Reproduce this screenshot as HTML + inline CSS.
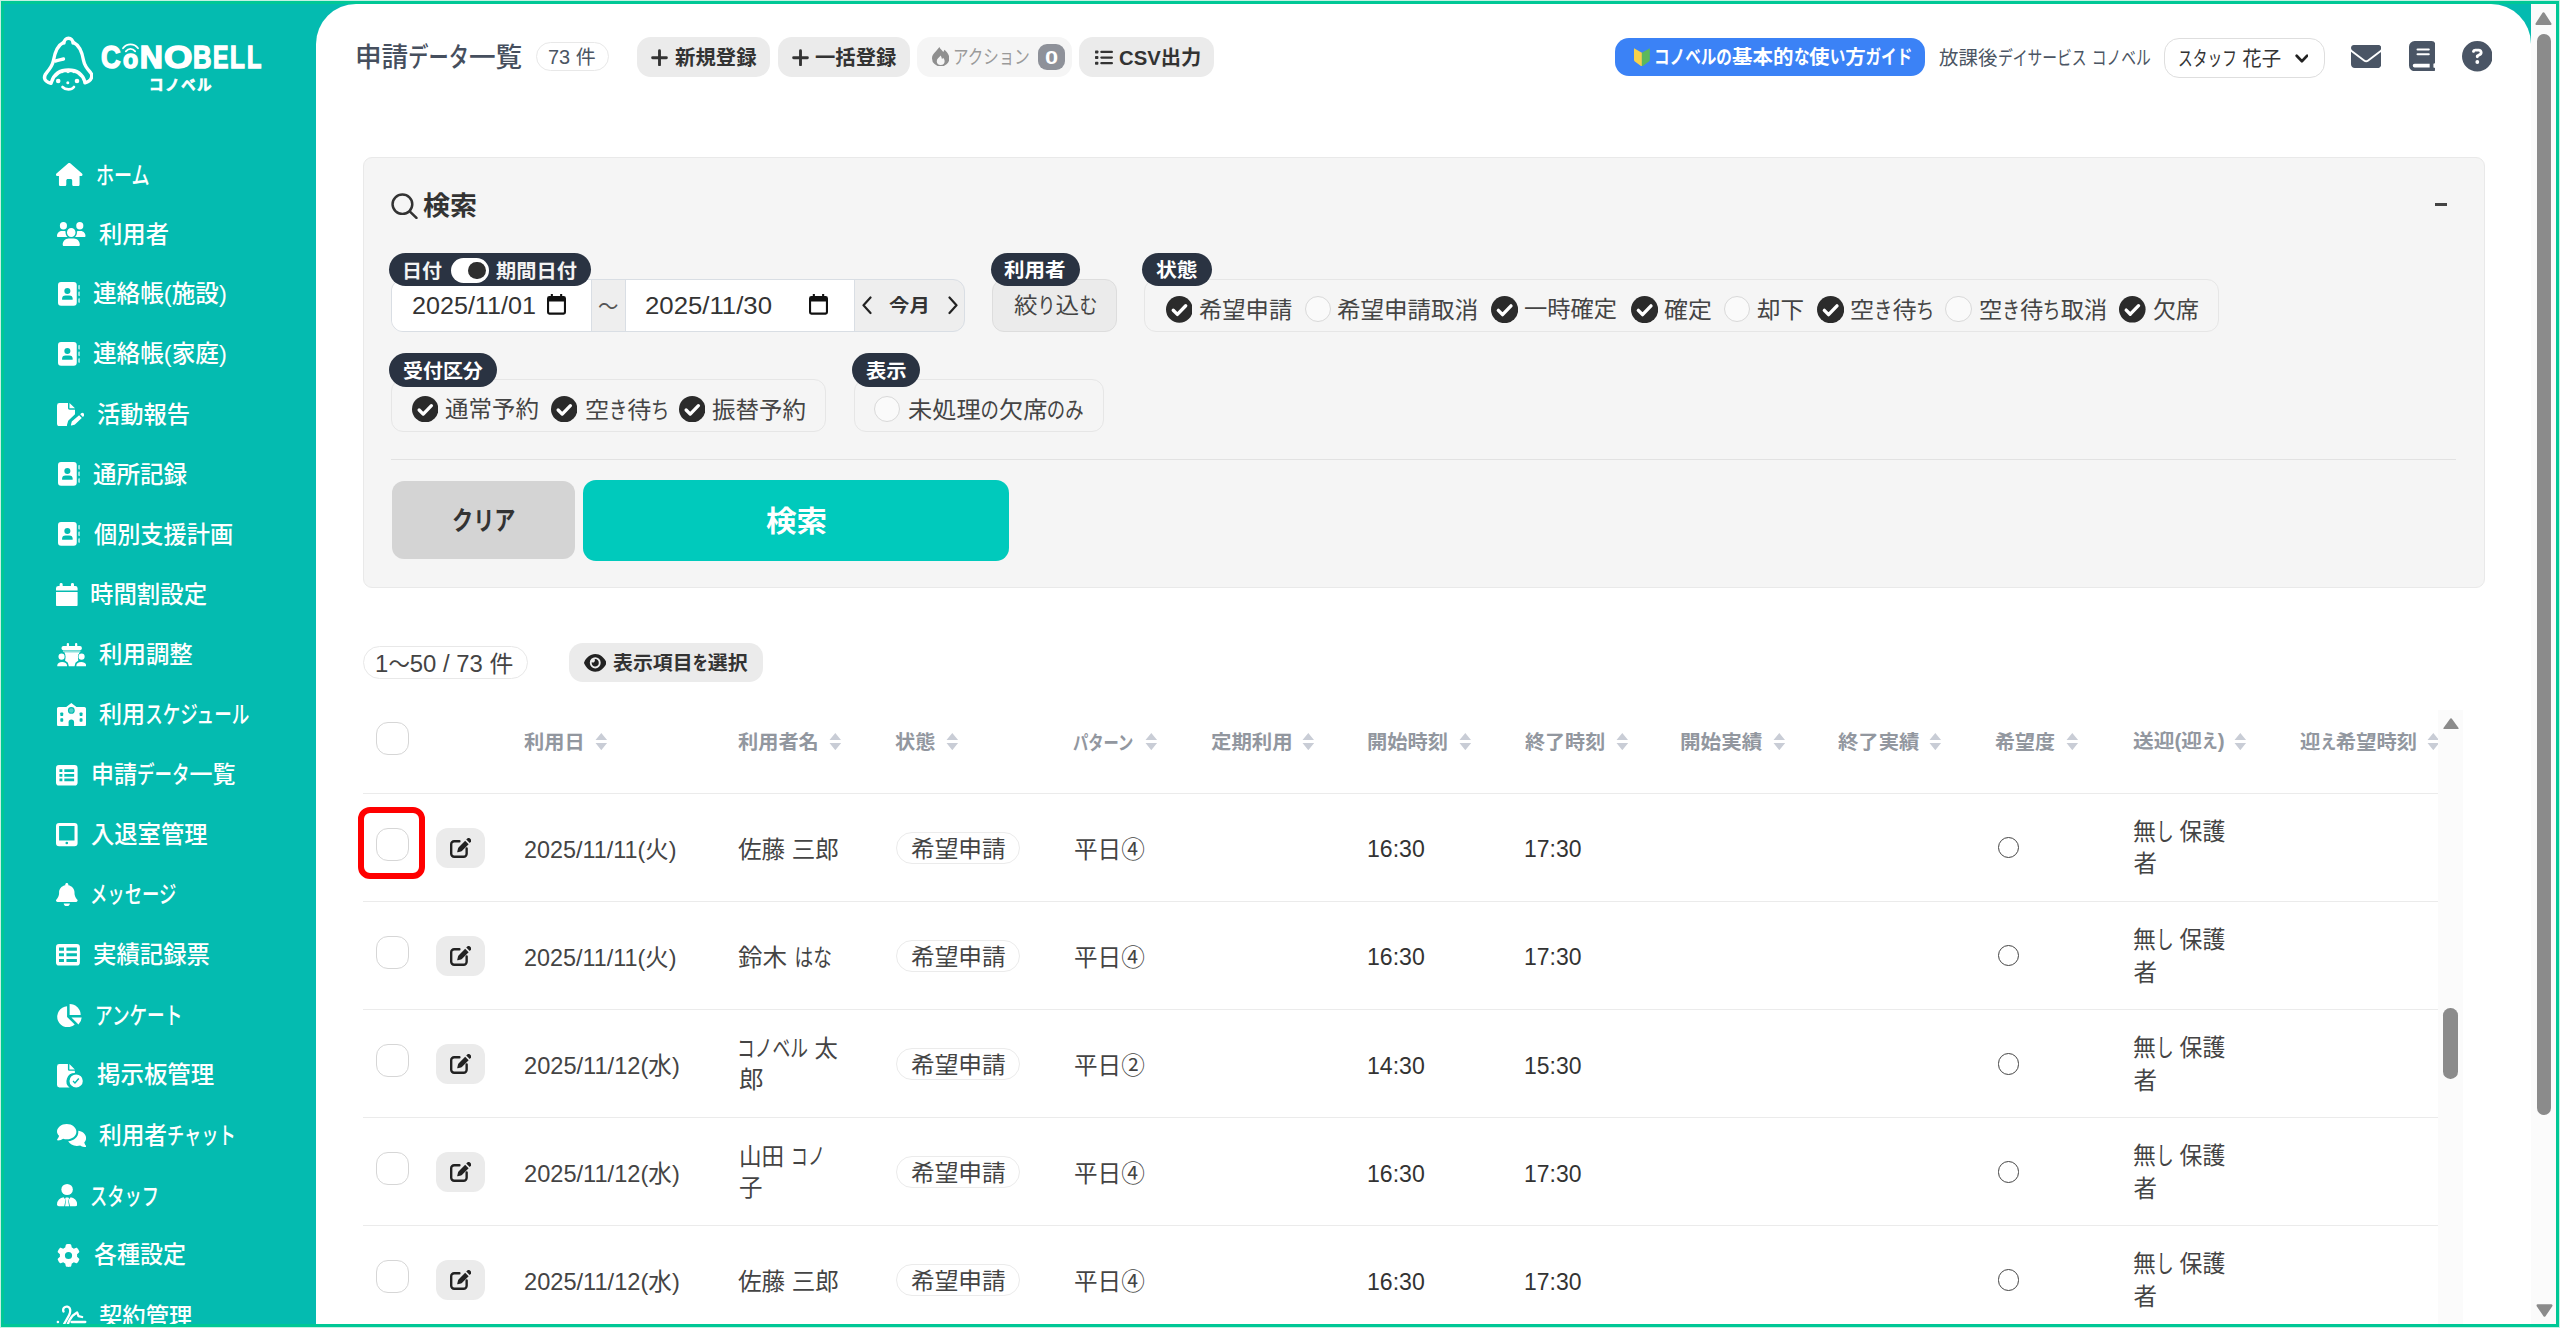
<!DOCTYPE html>
<html lang="ja"><head><meta charset="utf-8"><title>申請データ一覧</title><style>
*{margin:0;padding:0;box-sizing:border-box}
html,body{width:2560px;height:1328px;overflow:hidden;background:#fff}
body{font-family:"Liberation Sans","Noto Sans CJK JP",sans-serif;position:relative}
.a{position:absolute}
.t{position:absolute;white-space:nowrap;line-height:1;transform-origin:0 50%}
.k{display:inline-block;vertical-align:baseline}
.k>span{display:inline-block;transform-origin:0 50%;white-space:nowrap}
</style></head><body>
<div class="a" style="left:0.0px;top:0.0px;width:2560.0px;height:1328.0px;background:#04bbb0;"></div>
<div class="a" style="left:316.0px;top:4.0px;width:2215.0px;height:1336.0px;background:#fff;border-radius:40px 40px 0 0;"></div>
<div class="a" style="left:2531.0px;top:4.0px;width:25.0px;height:1320.0px;background:#fbfbfb;"></div>
<svg class="a" style="left:2535.0px;top:11.5px;" width="17.0" height="13.5" viewBox="0 0 17 13.5" preserveAspectRatio="none"><path fill="#8b8b8b" stroke="#8b8b8b" stroke-width="2.400" stroke-linejoin="round" d="M8.500 1.500l6.800 10.500h-13.600z"/></svg>
<div class="a" style="left:2536.5px;top:34.0px;width:14.3px;height:1081.0px;background:#8b8b8b;border-radius:7.2px;"></div>
<svg class="a" style="left:2535.5px;top:1304.0px;" width="17.0" height="13.0" viewBox="0 0 17 13" preserveAspectRatio="none"><path fill="#8b8b8b" stroke="#8b8b8b" stroke-width="2.400" stroke-linejoin="round" d="M8.500 11.500l6.800-10h-13.600z"/></svg>
<svg class="a" style="left:42.0px;top:35.0px;" width="51.0" height="57.0" viewBox="0 0 51 57" preserveAspectRatio="none"><g fill="none" stroke="#fff" stroke-width="3.400" stroke-linecap="round" stroke-linejoin="round"><path d="M22 8a4.500 4.800 0 0 1 9 0"/><path d="M21 7.800c-5.500 2.700-8 9-9.500 17.500c-1 5.500-3.500 8.500-7 12.500c-3 3.500-3.500 8.500 4.500 10.500"/><path d="M32 7.800c5.500 2.700 8 9 9.500 17.500c1 5.500 3.500 8.500 7 12.200c2.500 3 1.500 8.500-5.500 10.300"/><path d="M9.500 47c2.500-8 9-12 17-12s14 4 16.500 12"/><path d="M13.500 26c3-.8 5.500-1.500 8-2"/><path d="M20 37.500c1.500-1.500 4-1.500 6 0c2-1.500 4.500-1.500 6 0" stroke-width="1.500"/><path d="M20.500 52c3 3.200 9 3.200 11.500 0" stroke-width="2.600"/></g><circle cx="16.200" cy="46" r="2.300" fill="#fff"/><circle cx="35" cy="46" r="2.300" fill="#fff"/><circle cx="25.800" cy="47.800" r="1.500" fill="#fff"/></svg>
<div class="t" style="left:100.5px;top:41.3px;transform:scaleX(0.850);font-size:32px;font-weight:700;color:#fff;-webkit-text-stroke:1.500px #fff;">C</div>
<div class="t" style="left:139.8px;top:41.3px;transform:scaleX(1.000);font-size:32px;font-weight:700;color:#fff;-webkit-text-stroke:1.500px #fff;">N</div>
<div class="t" style="left:164.2px;top:41.3px;transform:scaleX(1.143);font-size:32px;font-weight:700;color:#fff;-webkit-text-stroke:1.500px #fff;">O</div>
<div class="t" style="left:193.2px;top:41.3px;transform:scaleX(0.800);font-size:32px;font-weight:700;color:#fff;-webkit-text-stroke:1.500px #fff;">B</div>
<div class="t" style="left:213.1px;top:41.3px;transform:scaleX(0.720);font-size:32px;font-weight:700;color:#fff;-webkit-text-stroke:1.500px #fff;">E</div>
<div class="t" style="left:230.4px;top:41.3px;transform:scaleX(0.756);font-size:32px;font-weight:700;color:#fff;-webkit-text-stroke:1.500px #fff;">L</div>
<div class="t" style="left:246.6px;top:41.3px;transform:scaleX(0.733);font-size:32px;font-weight:700;color:#fff;-webkit-text-stroke:1.500px #fff;">L</div>
<div class="t" style="left:122.6px;top:47.4px;transform:scaleX(0.987);font-size:25px;font-weight:700;color:#fff;-webkit-text-stroke:1.500px #fff;">o</div>
<svg class="a" style="left:121.5px;top:43.0px;" width="17.0" height="10.0" viewBox="0 0 17 10" preserveAspectRatio="none"><g fill="none" stroke="#fff" stroke-width="1.800" stroke-linecap="round"><path d="M1 5.200c4-5 11-5 15 0"/><path d="M3.800 8.400c2.700-3.300 6.700-3.300 9.400 0"/></g></svg>
<div class="t" style="left:148.7px;top:76.8px;transform:scaleX(0.969);font-size:15px;font-weight:700;color:#fff;letter-spacing:1.5px;-webkit-text-stroke:0.600px #fff;">コノベル</div>
<svg class="a" style="left:56.3px;top:163.0px;color:#fff;" width="26.5" height="23.3" viewBox="0 0 576 512" preserveAspectRatio="none"><path fill="currentColor" d="M575.8 255.5c0 18-15 32.100-32 32.100h-32l.7 160.200c0 2.700-.2 5.400-.5 8.100V472c0 22.100-17.900 40-40 40H456c-1.100 0-2.200 0-3.300-.1c-1.400 .1-2.800 .1-4.200 .1H416 392c-22.100 0-40-17.900-40-40V448 384c0-17.700-14.300-32-32-32H256c-17.700 0-32 14.300-32 32v64 24c0 22.100-17.900 40-40 40H160 128.100c-1.500 0-3-.1-4.500-.2c-1.200 .1-2.400 .2-3.600 .2H104c-22.100 0-40-17.900-40-40V360c0-.9 0-1.900 .1-2.800V287.600H32c-18 0-32-14-32-32.100c0-9 3-17 10-24L266.400 8c7-7 15-8 22-8s15 2 21 7L564.800 231.500c8 7 12 15 11 24z"/></svg>
<div class="t" style="left:96.0px;top:163.6px;transform:scaleX(0.990);font-size:24px;font-weight:500;color:#fff;"><span class="k" style="width:54.72px"><span style="transform:scaleX(0.76)">ホーム</span></span></div>
<svg class="a" style="left:57.0px;top:222.0px;color:#fff;" width="28.5" height="24.0" viewBox="0 0 640 512" preserveAspectRatio="none"><path fill="currentColor" d="M144 0a80 80 0 1 1 0 160A80 80 0 1 1 144 0zM512 0a80 80 0 1 1 0 160A80 80 0 1 1 512 0zM0 298.700C0 239.800 47.800 192 106.700 192h42.700c15.900 0 31 3.500 44.600 9.700c-1.300 7.200-1.900 14.700-1.900 22.300c0 38.200 16.800 72.500 43.300 96c-.2 0-.4 0-.7 0H21.300C9.600 320 0 310.400 0 298.700zM405.300 320c-.2 0-.4 0-.7 0c26.600-23.500 43.300-57.800 43.300-96c0-7.600-.7-15-1.900-22.300c13.600-6.300 28.700-9.700 44.600-9.700h42.700C592.200 192 640 239.800 640 298.700c0 11.800-9.600 21.300-21.300 21.300H405.300zM224 224a96 96 0 1 1 192 0 96 96 0 1 1 -192 0zM128 485.300C128 411.700 187.700 352 261.300 352H378.700C452.300 352 512 411.700 512 485.300c0 14.700-11.900 26.700-26.700 26.700H154.700c-14.700 0-26.700-11.900-26.700-26.700z"/></svg>
<div class="t" style="left:99.4px;top:222.5px;transform:scaleX(0.973);font-size:24px;font-weight:500;color:#fff;">利用者</div>
<svg class="a" style="left:58.0px;top:282.4px;color:#fff;" width="22.3" height="23.8" viewBox="0 0 22 24" preserveAspectRatio="none"><path fill="currentColor" fill-rule="evenodd" d="M3 0h12.500a3 3 0 0 1 3 3v18a3 3 0 0 1-3 3H3a3 3 0 0 1-3-3V3a3 3 0 0 1 3-3zM9.250 6a3 3 0 1 0 0 6a3 3 0 1 0 0-6zM7.500 13.500a3.500 3.500 0 0 0-3.500 3.500v.3a.7.7 0 0 0 .7.7h9.100a.7.7 0 0 0 .7-.7v-.3a3.500 3.500 0 0 0-3.500-3.500z"/><g fill="currentColor" opacity=".6"><rect x="19.800" y="3" width="2.200" height="4.500" rx="1"/><rect x="19.800" y="9.700" width="2.200" height="4.500" rx="1"/><rect x="19.800" y="16.400" width="2.200" height="4.500" rx="1"/></g></svg>
<div class="t" style="left:93.4px;top:282.0px;transform:scaleX(0.984);font-size:24px;font-weight:500;color:#fff;">連絡帳(施設)</div>
<svg class="a" style="left:58.0px;top:342.4px;color:#fff;" width="22.3" height="23.8" viewBox="0 0 22 24" preserveAspectRatio="none"><path fill="currentColor" fill-rule="evenodd" d="M3 0h12.500a3 3 0 0 1 3 3v18a3 3 0 0 1-3 3H3a3 3 0 0 1-3-3V3a3 3 0 0 1 3-3zM9.250 6a3 3 0 1 0 0 6a3 3 0 1 0 0-6zM7.500 13.500a3.500 3.500 0 0 0-3.500 3.500v.3a.7.7 0 0 0 .7.7h9.100a.7.7 0 0 0 .7-.7v-.3a3.500 3.500 0 0 0-3.500-3.500z"/><g fill="currentColor" opacity=".6"><rect x="19.800" y="3" width="2.200" height="4.500" rx="1"/><rect x="19.800" y="9.700" width="2.200" height="4.500" rx="1"/><rect x="19.800" y="16.400" width="2.200" height="4.500" rx="1"/></g></svg>
<div class="t" style="left:93.4px;top:342.0px;transform:scaleX(0.984);font-size:24px;font-weight:500;color:#fff;">連絡帳(家庭)</div>
<svg class="a" style="left:57.0px;top:402.6px;color:#fff;" width="27.0" height="23.2" viewBox="0 0 27 24" preserveAspectRatio="none"><path fill="currentColor" d="M2.500 0h8.500v5.500a1.500 1.500 0 0 0 1.500 1.500h5.500v4.600l-6.300 6.300a3 3 0 0 0-.8 1.400l-.9 3.600a1.500 1.500 0 0 0 .1 1.100h-7.600a2.500 2.500 0 0 1-2.500-2.500v-19a2.500 2.500 0 0 1 2.500-2.500zM12.500 0l5.500 5.500h-5.500z"/><path fill="currentColor" d="M24.200 10.700a1.600 1.600 0 0 1 2.300 0l.4.4a1.600 1.600 0 0 1 0 2.300l-1 1-2.700-2.700zM22.100 12.800l2.700 2.700-6.600 6.600a1.500 1.500 0 0 1-.7.400l-3 .75a.5.5 0 0 1-.6-.6l.75-3a1.500 1.500 0 0 1 .4-.7z"/></svg>
<div class="t" style="left:96.7px;top:402.5px;transform:scaleX(0.970);font-size:24px;font-weight:500;color:#fff;">活動報告</div>
<svg class="a" style="left:58.0px;top:462.4px;color:#fff;" width="22.3" height="23.8" viewBox="0 0 22 24" preserveAspectRatio="none"><path fill="currentColor" fill-rule="evenodd" d="M3 0h12.500a3 3 0 0 1 3 3v18a3 3 0 0 1-3 3H3a3 3 0 0 1-3-3V3a3 3 0 0 1 3-3zM9.250 6a3 3 0 1 0 0 6a3 3 0 1 0 0-6zM7.500 13.500a3.500 3.500 0 0 0-3.500 3.500v.3a.7.7 0 0 0 .7.7h9.100a.7.7 0 0 0 .7-.7v-.3a3.500 3.500 0 0 0-3.500-3.500z"/><g fill="currentColor" opacity=".6"><rect x="19.800" y="3" width="2.200" height="4.500" rx="1"/><rect x="19.800" y="9.700" width="2.200" height="4.500" rx="1"/><rect x="19.800" y="16.400" width="2.200" height="4.500" rx="1"/></g></svg>
<div class="t" style="left:93.4px;top:462.5px;transform:scaleX(0.980);font-size:24px;font-weight:500;color:#fff;">通所記録</div>
<svg class="a" style="left:58.0px;top:522.4px;color:#fff;" width="22.3" height="23.8" viewBox="0 0 22 24" preserveAspectRatio="none"><path fill="currentColor" fill-rule="evenodd" d="M3 0h12.500a3 3 0 0 1 3 3v18a3 3 0 0 1-3 3H3a3 3 0 0 1-3-3V3a3 3 0 0 1 3-3zM9.250 6a3 3 0 1 0 0 6a3 3 0 1 0 0-6zM7.500 13.500a3.500 3.500 0 0 0-3.500 3.500v.3a.7.7 0 0 0 .7.7h9.100a.7.7 0 0 0 .7-.7v-.3a3.500 3.500 0 0 0-3.500-3.500z"/><g fill="currentColor" opacity=".6"><rect x="19.800" y="3" width="2.200" height="4.500" rx="1"/><rect x="19.800" y="9.700" width="2.200" height="4.500" rx="1"/><rect x="19.800" y="16.400" width="2.200" height="4.500" rx="1"/></g></svg>
<div class="t" style="left:94.4px;top:522.5px;transform:scaleX(0.966);font-size:24px;font-weight:500;color:#fff;">個別支援計画</div>
<svg class="a" style="left:56.3px;top:582.5px;color:#fff;" width="21.6" height="23.9" viewBox="0 0 21 24" preserveAspectRatio="none"><path fill="currentColor" d="M5 0a1.500 1.500 0 0 1 1.500 1.500v1.500h8v-1.500a1.500 1.500 0 0 1 3 0v1.500h1.200a2.300 2.300 0 0 1 2.300 2.300v2.200h-21v-2.200a2.300 2.300 0 0 1 2.300-2.300h1.200v-1.500a1.500 1.500 0 0 1 1.500-1.500zM0 9h21v12.700a2.300 2.300 0 0 1-2.300 2.300h-16.400a2.300 2.300 0 0 1-2.300-2.300z"/></svg>
<div class="t" style="left:89.8px;top:582.5px;transform:scaleX(0.976);font-size:24px;font-weight:500;color:#fff;">時間割設定</div>
<svg class="a" style="left:56.6px;top:643.3px;color:#fff;" width="29.4" height="23.6" viewBox="200 160 355 285" preserveAspectRatio="none"><g fill="currentColor"><rect x="318" y="160" width="27" height="48" rx="11"/><rect x="418" y="160" width="27" height="48" rx="11"/><rect x="255" y="195" width="245" height="52" rx="22"/><rect x="272" y="251" width="211" height="19" opacity=".55"/><path d="M288 272H475C455 300 450 350 458 372L423 398L412 441H343L332 398L297 372C305 350 308 300 288 272Z"/><circle cx="255" cy="325" r="44" fill="#04bbb0"/><circle cx="497" cy="325" r="44" fill="#04bbb0"/><circle cx="255" cy="325" r="37"/><circle cx="497" cy="325" r="37"/><path d="M203 441v-9c0-25 25-42 59-42s59 17 59 42v9z"/><path d="M434 441v-9c0-25 25-42 59-42s59 17 59 42v9z"/></g></svg>
<div class="t" style="left:99.4px;top:642.5px;transform:scaleX(0.977);font-size:24px;font-weight:500;color:#fff;">利用調整</div>
<svg class="a" style="left:57.0px;top:703.3px;color:#fff;" width="29.0" height="23.2" viewBox="205 885 350 280" preserveAspectRatio="none"><path fill="currentColor" d="M378 885L440 932H535a20 20 0 0 1 20 20V1145a20 20 0 0 1-20 20H225a20 20 0 0 1-20-20V952a20 20 0 0 1 20-20H316Z"/><g fill="#04bbb0"><rect x="245" y="1000" width="35" height="42" rx="9"/><rect x="245" y="1070" width="35" height="42" rx="9"/><rect x="478" y="1000" width="35" height="42" rx="9"/><rect x="478" y="1070" width="35" height="42" rx="9"/><circle cx="378" cy="975" r="41"/><path d="M345 1165V1118a33 33 0 0 1 66 0V1165Z"/><rect x="316" y="940" width="5" height="225" opacity=".0"/></g><circle cx="378" cy="975" r="27" fill="currentColor" opacity=".3"/></svg>
<div class="t" style="left:99.4px;top:703.0px;transform:scaleX(0.962);font-size:24px;font-weight:500;color:#fff;">利用<span class="k" style="width:109.44px"><span style="transform:scaleX(0.76)">スケジュール</span></span></div>
<svg class="a" style="left:56.3px;top:765.4px;color:#fff;" width="21.6" height="20.6" viewBox="0 0 22 20" preserveAspectRatio="none"><path fill="currentColor" fill-rule="evenodd" d="M3 0h16a3 3 0 0 1 3 3v14a3 3 0 0 1-3 3h-16a3 3 0 0 1-3-3v-14a3 3 0 0 1 3-3zM3.500 4.200v2.600h3v-2.600zM8.500 4.200v2.600h10v-2.600zM3.500 8.700v2.600h3v-2.600zM8.500 8.700v2.600h10v-2.600zM3.500 13.200v2.600h3v-2.600zM8.500 13.200v2.600h10v-2.600z"/></svg>
<div class="t" style="left:90.9px;top:763.0px;transform:scaleX(0.958);font-size:24px;font-weight:500;color:#fff;">申請<span class="k" style="width:54.72px"><span style="transform:scaleX(0.76)">データ</span></span>一覧</div>
<svg class="a" style="left:56.3px;top:823.4px;color:#fff;" width="21.6" height="23.2" viewBox="0 0 21 24" preserveAspectRatio="none"><path fill="currentColor" fill-rule="evenodd" d="M3 0h15a3 3 0 0 1 3 3v18a3 3 0 0 1-3 3h-15a3 3 0 0 1-3-3v-18a3 3 0 0 1 3-3zM3 3v15h15v-15zM10.500 19.500a1.300 1.300 0 1 0 0 2.600a1.300 1.300 0 1 0 0-2.600z"/></svg>
<div class="t" style="left:90.8px;top:822.5px;transform:scaleX(0.971);font-size:24px;font-weight:500;color:#fff;">入退室管理</div>
<svg class="a" style="left:56.3px;top:883.0px;color:#fff;" width="21.6" height="23.3" viewBox="0 0 448 512" preserveAspectRatio="none"><path fill="currentColor" d="M224 0c-17.700 0-32 14.300-32 32V51.200C119 66 64 130.600 64 208v18.800c0 47-17.300 92.400-48.500 127.600l-7.400 8.300c-8.400 9.400-10.400 22.900-5.300 34.400S19.400 416 32 416H416c12.600 0 24-7.400 29.200-18.900s3.100-25-5.300-34.400l-7.400-8.300C401.300 319.200 384 273.900 384 226.800V208c0-77.400-55-142-128-156.800V32c0-17.700-14.300-32-32-32zm45.300 493.300c12-12 18.700-28.300 18.700-45.300H224 160c0 17 6.700 33.300 18.700 45.300s28.300 18.700 45.300 18.700s33.300-6.700 45.300-18.700z"/></svg>
<div class="t" style="left:89.9px;top:882.5px;transform:scaleX(0.952);font-size:24px;font-weight:500;color:#fff;"><span class="k" style="width:91.20px"><span style="transform:scaleX(0.76)">メッセージ</span></span></div>
<svg class="a" style="left:56.3px;top:944.4px;color:#fff;" width="23.9" height="21.6" viewBox="0 0 24 21" preserveAspectRatio="none"><path fill="currentColor" fill-rule="evenodd" d="M3 0h18a3 3 0 0 1 3 3v15a3 3 0 0 1-3 3h-18a3 3 0 0 1-3-3v-15a3 3 0 0 1 3-3zM3 3.500v3h5v-3zM10.500 3.500v3h10.500v-3zM3 9v3h5v-3zM10.500 9v3h10.500v-3zM3 14.500v3h5v-3zM10.500 14.500v3h10.500v-3z"/></svg>
<div class="t" style="left:93.4px;top:942.5px;transform:scaleX(0.975);font-size:24px;font-weight:500;color:#fff;">実績記録票</div>
<svg class="a" style="left:57.4px;top:1004.3px;color:#fff;" width="25.2" height="23.0" viewBox="0 0 25 23" preserveAspectRatio="none"><path fill="currentColor" d="M10 2.200v10.800l7.600 7.600a10.500 10.500 0 1 1-7.600-18.400z"/><path fill="currentColor" d="M12.500 0a11 11 0 0 1 11 11h-11z"/><path fill="currentColor" d="M14.300 13.500h10.200a11 11 0 0 1-3.200 7z"/></svg>
<div class="t" style="left:95.1px;top:1004.0px;transform:scaleX(0.965);font-size:24px;font-weight:500;color:#fff;"><span class="k" style="width:91.20px"><span style="transform:scaleX(0.76)">アンケート</span></span></div>
<svg class="a" style="left:56.8px;top:1064.0px;color:#fff;" width="25.8" height="23.5" viewBox="0 0 26 24" preserveAspectRatio="none"><path fill="currentColor" d="M2.500 0h8.500v5.500a1.500 1.500 0 0 0 1.500 1.500h5.500v2.200a8.300 8.300 0 0 0-5.300 14.800h-10.200a2.500 2.500 0 0 1-2.500-2.500v-19a2.500 2.500 0 0 1 2.500-2.500zM12.500 0l5.500 5.500h-5.500z"/><path fill="currentColor" fill-rule="evenodd" d="M19.300 10.600a6.700 6.700 0 1 0 0 13.400a6.700 6.700 0 1 0 0-13.400zM22.500 15.200l-3.900 4.700a.7.7 0 0 1-1 0l-1.900-2 1-1 1.300 1.400 3.400-4z"/></svg>
<div class="t" style="left:96.5px;top:1063.0px;transform:scaleX(0.977);font-size:24px;font-weight:500;color:#fff;">掲示板管理</div>
<svg class="a" style="left:56.8px;top:1124.0px;color:#fff;" width="29.1" height="23.0" viewBox="0 0 30 24" preserveAspectRatio="none"><path fill="currentColor" d="M10 0c5.500 0 10 3.600 10 8s-4.500 8-10 8a12 12 0 0 1-3.600-.55c-1.300 .9-3.200 1.700-5.500 1.700a.8.8 0 0 1-.6-1.300c.6-.7 1.500-1.900 1.900-3.500c-1.400-1.400-2.200-3-2.200-4.350c0-4.400 4.500-8 10-8z"/><path fill="currentColor" d="M21.800 7.100c4.700 .5 8.200 3.800 8.200 7.700c0 1.700-.7 3.300-1.900 4.600c.4 1.500 1.200 2.700 1.800 3.400a.8.8 0 0 1-.6 1.300c-2.200 0-4.100-.8-5.400-1.700a12 12 0 0 1-3.500 .5c-4 0-7.400-2-8.900-4.800c6 -.5 10.500-4.700 10.500-9.700q0-.7-.2-1.300z"/></svg>
<div class="t" style="left:99.4px;top:1123.5px;transform:scaleX(0.945);font-size:24px;font-weight:500;color:#fff;">利用者<span class="k" style="width:72.96px"><span style="transform:scaleX(0.76)">チャット</span></span></div>
<svg class="a" style="left:56.8px;top:1184.4px;color:#fff;" width="20.2" height="22.2" viewBox="0 0 21 24" preserveAspectRatio="none"><circle fill="currentColor" cx="10.500" cy="6" r="6"/><path fill="currentColor" d="M6.800 14.200l2.200 3-1.500 6.800h-5.500a2 2 0 0 1-2-2.200a8 8 0 0 1 6.800-7.600zM14.200 14.200a8 8 0 0 1 6.800 7.600a2 2 0 0 1-2 2.200h-5.500l-1.500-6.800zM9.200 14.500h2.600l.8 1.500-1.100 1.500 1.100 6.500h-4.200l1.100-6.500-1.100-1.500z"/></svg>
<div class="t" style="left:89.5px;top:1184.5px;transform:scaleX(0.945);font-size:24px;font-weight:500;color:#fff;"><span class="k" style="width:72.96px"><span style="transform:scaleX(0.76)">スタッフ</span></span></div>
<svg class="a" style="left:56.8px;top:1244.0px;color:#fff;" width="23.0" height="23.0" viewBox="0 0 512 512" preserveAspectRatio="none"><path fill="currentColor" d="M495.900 166.600c3.200 8.700 .5 18.400-6.400 24.600l-43.300 39.400c1.100 8.300 1.700 16.800 1.700 25.400s-.6 17.100-1.700 25.400l43.300 39.400c6.900 6.200 9.600 15.900 6.400 24.600c-4.400 11.900-9.700 23.300-15.800 34.300l-4.700 8.100c-6.600 11-14 21.400-22.100 31.200c-5.900 7.200-15.700 9.600-24.500 6.800l-55.700-17.700c-13.400 10.300-28.200 18.900-44 25.400l-12.500 57.100c-2 9.100-9 16.300-18.200 17.800c-13.800 2.300-28 3.500-42.500 3.500s-28.700-1.200-42.500-3.500c-9.200-1.500-16.200-8.700-18.200-17.800l-12.500-57.100c-15.800-6.500-30.600-15.100-44-25.400L83.100 425.900c-8.800 2.800-18.600 .3-24.500-6.800c-8.100-9.800-15.500-20.200-22.100-31.200l-4.700-8.100c-6.100-11-11.400-22.400-15.800-34.300c-3.200-8.700-.5-18.400 6.400-24.600l43.300-39.400C64.600 273.100 64 264.600 64 256s.6-17.100 1.700-25.400L22.400 191.200c-6.900-6.200-9.600-15.900-6.400-24.600c4.400-11.900 9.700-23.300 15.800-34.300l4.700-8.100c6.600-11 14-21.400 22.100-31.200c5.900-7.200 15.700-9.600 24.500-6.800l55.700 17.700c13.400-10.300 28.200-18.900 44-25.400l12.500-57.100c2-9.100 9-16.300 18.200-17.800C227.300 1.200 241.500 0 256 0s28.700 1.200 42.500 3.500c9.200 1.500 16.200 8.700 18.200 17.800l12.500 57.100c15.800 6.500 30.600 15.100 44 25.400l55.700-17.700c8.800-2.800 18.600-.3 24.500 6.800c8.100 9.800 15.500 20.200 22.100 31.200l4.700 8.100c6.100 11 11.400 22.400 15.800 34.300zM256 336a80 80 0 1 0 0-160 80 80 0 1 0 0 160z"/></svg>
<div class="t" style="left:94.0px;top:1243.0px;transform:scaleX(0.957);font-size:24px;font-weight:500;color:#fff;">各種設定</div>
<div class="t" style="left:99.3px;top:1304.5px;transform:scaleX(0.972);font-size:24px;font-weight:500;color:#fff;">契約管理</div>
<svg class="a" style="left:55.0px;top:1303.0px;" width="33.0" height="24.0" viewBox="55 1303 33 24" preserveAspectRatio="none"><g fill="none" stroke="#fff" stroke-width="2.300" stroke-linecap="round" stroke-linejoin="round"><path d="M63.500 1311.500c-1.200-3 1.200-5.200 3.800-4.800c3.200 .5 3.600 4.300 2 8c-1.600 3.500-4.500 7-6 11.300"/><path d="M66.800 1327c1.200-4.500 3.200-8.500 5.800-11.300l4.500-3.300l1.400 3.700l3.600 .9"/><path d="M71.500 1322h13.800"/></g><circle cx="57.900" cy="1322" r="1.300" fill="#fff"/></svg>
<div class="t" style="left:355.3px;top:45.1px;transform:scaleX(0.986);font-size:27px;font-weight:500;color:#464f5e;">申請<span class="k" style="width:61.56px"><span style="transform:scaleX(0.76)">データ</span></span>一覧</div>
<div class="a" style="left:535.7px;top:42.3px;width:73.8px;height:29.2px;background:#fff;border:1.500px solid #e8e8e8;border-radius:15px;"></div>
<div class="t" style="left:548.0px;top:48.0px;transform:scaleX(1.022);font-size:19.5px;font-weight:400;color:#4b5563;">73 件</div>
<div class="a" style="left:637.0px;top:37.0px;width:133.0px;height:40.0px;background:#ebebeb;border-radius:14px;"></div>
<svg class="a" style="left:651.0px;top:48.5px;color:#333;" width="17.0" height="17.5" viewBox="0 0 16 16" preserveAspectRatio="none"><path fill="none" stroke="currentColor" stroke-width="2.700" stroke-linecap="round" d="M8 1.500v13M1.500 8h13"/></svg>
<div class="t" style="left:674.5px;top:48.0px;transform:scaleX(1.019);font-size:20px;font-weight:700;color:#333;">新規登録</div>
<div class="a" style="left:777.5px;top:37.0px;width:132.5px;height:40.0px;background:#ebebeb;border-radius:14px;"></div>
<svg class="a" style="left:792.0px;top:48.5px;color:#333;" width="17.0" height="17.5" viewBox="0 0 16 16" preserveAspectRatio="none"><path fill="none" stroke="currentColor" stroke-width="2.700" stroke-linecap="round" d="M8 1.500v13M1.500 8h13"/></svg>
<div class="t" style="left:814.7px;top:48.0px;transform:scaleX(1.017);font-size:20px;font-weight:700;color:#333;">一括登録</div>
<div class="a" style="left:917.0px;top:37.0px;width:155.0px;height:40.0px;background:#f5f5f5;border-radius:14px;"></div>
<svg class="a" style="left:931.8px;top:46.5px;color:#8f8f8f;" width="17.4" height="19.5" viewBox="0 0 20 24" preserveAspectRatio="none"><path fill="currentColor" fill-rule="evenodd" d="M8.500 0c1 2.500 3 4 4.500 6c.6-.8 1-1.700 1.200-2.600c3 2.600 5.800 6.400 5.800 10.600a10 10 0 0 1-20 0c0-5.500 5-8.500 8.500-14zM10 10.500c-2 2.500-4.500 4-4.500 7a4.500 4.500 0 0 0 9 0c0-1.500-.7-3-1.800-4.200c-.3 .7-.7 1.200-1.200 1.700c-.3-1.600-.8-3-1.500-4.500z"/></svg>
<div class="t" style="left:953.3px;top:48.0px;transform:scaleX(1.076);font-size:19px;font-weight:400;color:#9a9a9a;"><span class="k" style="width:72.20px"><span style="transform:scaleX(0.76)">アクション</span></span></div>
<div class="a" style="left:1038.0px;top:44.0px;width:26.8px;height:26.3px;background:#8e9199;border-radius:9px;"></div>
<div class="t" style="left:1044.7px;top:48.8px;transform:scaleX(1.312);font-size:18px;font-weight:700;color:#fff;">0</div>
<div class="a" style="left:1079.0px;top:37.0px;width:135.0px;height:40.0px;background:#ebebeb;border-radius:14px;"></div>
<svg class="a" style="left:1094.5px;top:49.5px;color:#333;" width="18.0" height="15.0" viewBox="0 0 24 20" preserveAspectRatio="none"><path fill="none" stroke="currentColor" stroke-width="3" stroke-linecap="round" d="M8.500 2.500h14M8.500 10h14M8.500 17.500h14"/><rect fill="currentColor" x="0" y="0.500" width="4.500" height="4" rx="1"/><rect fill="currentColor" x="0" y="8" width="4.500" height="4" rx="1"/><rect fill="currentColor" x="0" y="15.500" width="4.500" height="4" rx="1"/></svg>
<div class="t" style="left:1119.0px;top:48.0px;transform:scaleX(1.013);font-size:20px;font-weight:700;color:#333;">CSV出力</div>
<div class="a" style="left:1615.0px;top:38.0px;width:309.5px;height:37.5px;background:#3b82f6;border-radius:14px;"></div>
<svg class="a" style="left:1634.0px;top:46.5px;color:#fff;" width="15.8" height="19.7" viewBox="0 0 20 26" preserveAspectRatio="none"><path fill="#f7d24a" d="M0 1.500l10 6v18.500l-8.500-6.500a3 3 0 0 1-1.500-2.600z"/><path fill="#5cb85c" d="M20 1.500l-10 6v18.500l8.500-6.500a3 3 0 0 0 1.500-2.600z"/></svg>
<div class="t" style="left:1654.4px;top:48.3px;transform:scaleX(1.052);font-size:19.5px;font-weight:700;color:#fff;"><span class="k" style="width:74.10px"><span style="transform:scaleX(0.76)">コノベルの</span></span>基本的<span class="k" style="width:14.82px"><span style="transform:scaleX(0.76)">な</span></span>使<span class="k" style="width:14.82px"><span style="transform:scaleX(0.76)">い</span></span>方<span class="k" style="width:44.46px"><span style="transform:scaleX(0.76)">ガイド</span></span></div>
<div class="t" style="left:1939.0px;top:48.5px;transform:scaleX(0.998);font-size:19.5px;font-weight:400;color:#4b5563;">放課後<span class="k" style="width:88.92px"><span style="transform:scaleX(0.76)">デイサービス</span></span> <span class="k" style="width:59.28px"><span style="transform:scaleX(0.76)">コノベル</span></span></div>
<div class="a" style="left:2164.4px;top:38.0px;width:160.3px;height:40.3px;background:#fff;border:1.500px solid #dedede;border-radius:15px;"></div>
<div class="t" style="left:2177.8px;top:48.6px;transform:scaleX(0.945);font-size:20.5px;font-weight:400;color:#333;"><span class="k" style="width:62.32px"><span style="transform:scaleX(0.76)">スタッフ</span></span> 花子</div>
<svg class="a" style="left:2294.5px;top:54.0px;color:#222;" width="13.8" height="9.3" viewBox="0 0 14 9" preserveAspectRatio="none"><path fill="none" stroke="currentColor" stroke-width="2.700" stroke-linecap="round" stroke-linejoin="round" d="M1.700 1.700l5.300 5.300l5.300-5.300"/></svg>
<svg class="a" style="left:2350.7px;top:45.0px;color:#4a5565;" width="30.3" height="23.0" viewBox="0 0 512 384" preserveAspectRatio="none"><path fill="currentColor" d="M48 0C21.500 0 0 21.500 0 48c0 15.100 7.100 29.300 19.200 38.400L236.800 249.600c11.400 8.500 27 8.500 38.400 0L492.800 86.400c12.100-9.100 19.200-23.300 19.200-38.400c0-26.500-21.500-48-48-48H48zM0 112V320c0 35.300 28.700 64 64 64H448c35.300 0 64-28.700 64-64V112L294.400 275.200c-22.800 17.100-54 17.100-76.800 0L0 112z"/></svg>
<svg class="a" style="left:2409.0px;top:41.0px;color:#4a5565;" width="26.3" height="30.2" viewBox="0 0 21 24" preserveAspectRatio="none"><path fill="currentColor" fill-rule="evenodd" d="M4.500 0h13.500a3 3 0 0 1 3 3v13.500a1.500 1.500 0 0 1-1.500 1.500v3a1.500 1.500 0 0 1 0 3h-15a4.500 4.500 0 0 1-4.500-4.500v-15a4.500 4.500 0 0 1 4.500-4.500zM4.500 18a1.500 1.500 0 0 0 0 3h12v-3zM6 6.700a.8.8 0 0 0 .8.800h9a.8.8 0 0 0 0-1.600h-9a.8.8 0 0 0-.8.800zM6.800 9.700a.8.8 0 0 0 0 1.600h9a.8.8 0 0 0 0-1.600z"/></svg>
<svg class="a" style="left:2461.7px;top:41.0px;color:#4a5565;" width="30.6" height="30.6" viewBox="0 0 512 512" preserveAspectRatio="none"><path fill="currentColor" d="M256 512A256 256 0 1 0 256 0a256 256 0 1 0 0 512zM169.800 165.300c7.900-22.300 29.100-37.300 52.800-37.300h58.300c34.900 0 63.100 28.300 63.100 63.100c0 22.600-12.100 43.500-31.700 54.800L280 264.400c-.2 13-10.900 23.600-24 23.600c-13.300 0-24-10.700-24-24V250.500c0-8.600 4.600-16.500 12.100-20.800l44.300-25.400c4.700-2.700 7.600-7.700 7.600-13.100c0-8.400-6.800-15.100-15.100-15.100H222.600c-3.400 0-6.400 2.100-7.500 5.300l-.4 1.200c-4.400 12.500-18.200 19-30.600 14.600s-19-18.200-14.600-30.600l.4-1.200zM224 352a32 32 0 1 1 64 0 32 32 0 1 1 -64 0z"/></svg>
<div class="a" style="left:362.5px;top:157.0px;width:2122.0px;height:431.3px;background:#f5f5f5;border:1px solid #e9e9e9;border-radius:9px;"></div>
<svg class="a" style="left:390.5px;top:192.5px;color:#333;" width="27.0" height="26.5" viewBox="0 0 26 26" preserveAspectRatio="none"><circle fill="none" stroke="currentColor" stroke-width="2.400" cx="11" cy="11" r="9.500"/><path fill="none" stroke="currentColor" stroke-width="2.400" stroke-linecap="round" d="M18 18l6.500 6.500"/></svg>
<div class="t" style="left:423.0px;top:193.0px;transform:scaleX(1.041);font-size:26px;font-weight:700;color:#333;">検索</div>
<div class="a" style="left:2435.0px;top:203.0px;width:12.0px;height:2.5px;background:#444;"></div>
<div class="a" style="left:390.7px;top:278.7px;width:574.8px;height:53.0px;background:#eeeeee;border:1px solid #d9dee4;border-radius:12px;overflow:hidden;"><div class="a" style="left:0;top:0;width:200px;height:60px;background:#fff;border-right:1px solid #d9dee4"></div><div class="a" style="left:233px;top:0;width:230px;height:60px;background:#fff;border-left:1px solid #d9dee4;border-right:1px solid #d9dee4"></div></div>
<div class="t" style="left:412.0px;top:295.3px;transform:scaleX(1.069);font-size:23.5px;font-weight:400;color:#333;">2025/11/01</div>
<svg class="a" style="left:547.3px;top:294.3px;color:#111;" width="19.0" height="20.7" viewBox="0 0 20 21" preserveAspectRatio="none"><path fill="currentColor" fill-rule="evenodd" d="M4 0h2.200v2h7.600v-2h2.200v2h1.500a2.500 2.500 0 0 1 2.500 2.500v14a2.500 2.500 0 0 1-2.500 2.500h-15a2.500 2.500 0 0 1-2.500-2.500v-14a2.500 2.500 0 0 1 2.500-2.500h1.500zM2.200 7.500v10.800a.5.5 0 0 0 .5.500h14.600a.5.5 0 0 0 .5-.5v-10.800z"/></svg>
<div class="t" style="left:598.1px;top:295.5px;transform:scaleX(0.925);font-size:22px;font-weight:400;color:#555;">～</div>
<div class="t" style="left:644.5px;top:295.3px;transform:scaleX(1.096);font-size:23.5px;font-weight:400;color:#333;">2025/11/30</div>
<svg class="a" style="left:809.0px;top:294.3px;color:#111;" width="19.0" height="20.7" viewBox="0 0 20 21" preserveAspectRatio="none"><path fill="currentColor" fill-rule="evenodd" d="M4 0h2.200v2h7.600v-2h2.200v2h1.500a2.500 2.500 0 0 1 2.500 2.500v14a2.500 2.500 0 0 1-2.500 2.500h-15a2.500 2.500 0 0 1-2.500-2.500v-14a2.500 2.500 0 0 1 2.500-2.500h1.500zM2.200 7.500v10.800a.5.5 0 0 0 .5.500h14.600a.5.5 0 0 0 .5-.5v-10.800z"/></svg>
<svg class="a" style="left:861.5px;top:296.0px;color:#222;" width="10.0" height="18.5" viewBox="0 0 10 18" preserveAspectRatio="none"><path fill="none" stroke="currentColor" stroke-width="2.200" stroke-linecap="round" stroke-linejoin="round" d="M8.500 1.500l-7 7.500l7 7.500"/></svg>
<div class="t" style="left:889.3px;top:297.0px;transform:scaleX(1.103);font-size:18.5px;font-weight:700;color:#333;">今月</div>
<svg class="a" style="left:948.0px;top:296.0px;color:#222;" width="10.0" height="18.5" viewBox="0 0 10 18" preserveAspectRatio="none"><path fill="none" stroke="currentColor" stroke-width="2.200" stroke-linecap="round" stroke-linejoin="round" d="M1.500 1.500l7 7.500l-7 7.500"/></svg>
<div class="a" style="left:388.7px;top:252.8px;width:202.3px;height:33.7px;background:#2a3342;border-radius:17px;"></div>
<div class="t" style="left:402.3px;top:261.8px;transform:scaleX(1.053);font-size:19px;font-weight:700;color:#f4f4f4;">日付</div>
<div class="a" style="left:450.6px;top:257.6px;width:38.1px;height:25.4px;background:#fff;border-radius:13px;"></div>
<div class="a" style="left:468.2px;top:261.7px;width:17.4px;height:17.4px;background:#2f2f2f;border-radius:10px;"></div>
<div class="t" style="left:495.7px;top:261.8px;transform:scaleX(1.037);font-size:19.5px;font-weight:700;color:#f4f4f4;">期間日付</div>
<div class="a" style="left:992.4px;top:278.7px;width:124.6px;height:53.0px;background:#ebebeb;border:1px solid #dddddd;border-radius:12px;"></div>
<div class="t" style="left:1013.9px;top:294.5px;transform:scaleX(1.073);font-size:22px;font-weight:400;color:#444;">絞<span class="k" style="width:16.72px"><span style="transform:scaleX(0.76)">り</span></span>込<span class="k" style="width:16.72px"><span style="transform:scaleX(0.76)">む</span></span></div>
<div class="a" style="left:991.3px;top:252.8px;width:89.2px;height:33.7px;background:#2a3342;border-radius:17px;"></div>
<div class="t" style="left:1004.4px;top:261.0px;transform:scaleX(1.053);font-size:19.5px;font-weight:700;color:#fff;">利用者</div>
<div class="a" style="left:1144.3px;top:278.7px;width:1074.7px;height:53.0px;border:1px solid #e6e6e6;border-radius:12px;"></div>
<div class="a" style="left:1142.4px;top:252.8px;width:69.4px;height:33.7px;background:#2a3342;border-radius:17px;"></div>
<div class="t" style="left:1156.3px;top:261.0px;transform:scaleX(1.065);font-size:19.5px;font-weight:700;color:#fff;">状態</div>
<svg class="a" style="left:1165.6px;top:296.0px;color:#2b2b2b;" width="26.8" height="26.8" viewBox="0 0 100 100" preserveAspectRatio="none"><circle cx="50" cy="50" r="50" fill="currentColor"/><path fill="none" stroke="#fff" stroke-width="12.500" stroke-linecap="round" stroke-linejoin="round" d="M27 53l15.500 15.500l31-32"/></svg>
<div class="t" style="left:1198.8px;top:298.5px;transform:scaleX(1.013);font-size:23px;font-weight:400;color:#444;">希望申請</div>
<div class="a" style="left:1305.4px;top:296.4px;width:26.0px;height:26.0px;background:#fafafa;border:1.500px solid #d9d9d9;border-radius:13.0px;"></div>
<div class="t" style="left:1337.4px;top:298.5px;transform:scaleX(1.023);font-size:23px;font-weight:400;color:#444;">希望申請取消</div>
<svg class="a" style="left:1490.8px;top:295.8px;color:#2b2b2b;" width="27.2" height="27.2" viewBox="0 0 100 100" preserveAspectRatio="none"><circle cx="50" cy="50" r="50" fill="currentColor"/><path fill="none" stroke="#fff" stroke-width="12.500" stroke-linecap="round" stroke-linejoin="round" d="M27 53l15.500 15.500l31-32"/></svg>
<div class="t" style="left:1524.0px;top:298.0px;transform:scaleX(1.011);font-size:23px;font-weight:400;color:#444;">一時確定</div>
<svg class="a" style="left:1630.5px;top:295.8px;color:#2b2b2b;" width="27.2" height="27.2" viewBox="0 0 100 100" preserveAspectRatio="none"><circle cx="50" cy="50" r="50" fill="currentColor"/><path fill="none" stroke="#fff" stroke-width="12.500" stroke-linecap="round" stroke-linejoin="round" d="M27 53l15.500 15.500l31-32"/></svg>
<div class="t" style="left:1663.7px;top:298.5px;transform:scaleX(1.039);font-size:23px;font-weight:400;color:#444;">確定</div>
<div class="a" style="left:1724.0px;top:296.4px;width:26.0px;height:26.0px;background:#fafafa;border:1.500px solid #d9d9d9;border-radius:13.0px;"></div>
<div class="t" style="left:1756.7px;top:298.5px;transform:scaleX(1.025);font-size:23px;font-weight:400;color:#444;">却下</div>
<svg class="a" style="left:1817.0px;top:295.8px;color:#2b2b2b;" width="27.2" height="27.2" viewBox="0 0 100 100" preserveAspectRatio="none"><circle cx="50" cy="50" r="50" fill="currentColor"/><path fill="none" stroke="#fff" stroke-width="12.500" stroke-linecap="round" stroke-linejoin="round" d="M27 53l15.500 15.500l31-32"/></svg>
<div class="t" style="left:1850.0px;top:298.5px;transform:scaleX(1.048);font-size:23px;font-weight:400;color:#444;">空<span class="k" style="width:17.48px"><span style="transform:scaleX(0.76)">き</span></span>待<span class="k" style="width:17.48px"><span style="transform:scaleX(0.76)">ち</span></span></div>
<div class="a" style="left:1945.4px;top:296.3px;width:26.2px;height:26.2px;background:#fafafa;border:1.500px solid #d9d9d9;border-radius:13.099999999999909px;"></div>
<div class="t" style="left:1978.6px;top:298.5px;transform:scaleX(1.011);font-size:23px;font-weight:400;color:#444;">空<span class="k" style="width:17.48px"><span style="transform:scaleX(0.76)">き</span></span>待<span class="k" style="width:17.48px"><span style="transform:scaleX(0.76)">ち</span></span>取消</div>
<svg class="a" style="left:2119.4px;top:296.1px;color:#2b2b2b;" width="26.6" height="26.6" viewBox="0 0 100 100" preserveAspectRatio="none"><circle cx="50" cy="50" r="50" fill="currentColor"/><path fill="none" stroke="#fff" stroke-width="12.500" stroke-linecap="round" stroke-linejoin="round" d="M27 53l15.500 15.500l31-32"/></svg>
<div class="t" style="left:2153.0px;top:298.5px;transform:scaleX(1.000);font-size:23px;font-weight:400;color:#444;">欠席</div>
<div class="a" style="left:390.7px;top:378.5px;width:435.6px;height:53.7px;border:1px solid #e6e6e6;border-radius:12px;"></div>
<div class="a" style="left:388.7px;top:353.2px;width:108.8px;height:33.6px;background:#2a3342;border-radius:17px;"></div>
<div class="t" style="left:402.7px;top:361.5px;transform:scaleX(1.023);font-size:19.5px;font-weight:700;color:#fff;">受付区分</div>
<svg class="a" style="left:412.0px;top:396.0px;color:#2b2b2b;" width="26.4" height="26.4" viewBox="0 0 100 100" preserveAspectRatio="none"><circle cx="50" cy="50" r="50" fill="currentColor"/><path fill="none" stroke="#fff" stroke-width="12.500" stroke-linecap="round" stroke-linejoin="round" d="M27 53l15.500 15.500l31-32"/></svg>
<div class="t" style="left:444.7px;top:398.0px;transform:scaleX(1.021);font-size:23px;font-weight:400;color:#444;">通常予約</div>
<svg class="a" style="left:551.0px;top:396.0px;color:#2b2b2b;" width="26.4" height="26.4" viewBox="0 0 100 100" preserveAspectRatio="none"><circle cx="50" cy="50" r="50" fill="currentColor"/><path fill="none" stroke="#fff" stroke-width="12.500" stroke-linecap="round" stroke-linejoin="round" d="M27 53l15.500 15.500l31-32"/></svg>
<div class="t" style="left:584.6px;top:398.5px;transform:scaleX(1.047);font-size:23px;font-weight:400;color:#444;">空<span class="k" style="width:17.48px"><span style="transform:scaleX(0.76)">き</span></span>待<span class="k" style="width:17.48px"><span style="transform:scaleX(0.76)">ち</span></span></div>
<svg class="a" style="left:678.8px;top:396.0px;color:#2b2b2b;" width="26.4" height="26.4" viewBox="0 0 100 100" preserveAspectRatio="none"><circle cx="50" cy="50" r="50" fill="currentColor"/><path fill="none" stroke="#fff" stroke-width="12.500" stroke-linecap="round" stroke-linejoin="round" d="M27 53l15.500 15.500l31-32"/></svg>
<div class="t" style="left:712.0px;top:398.5px;transform:scaleX(1.022);font-size:23px;font-weight:400;color:#444;">振替予約</div>
<div class="a" style="left:853.7px;top:378.5px;width:250.1px;height:53.7px;border:1px solid #e6e6e6;border-radius:12px;"></div>
<div class="a" style="left:851.8px;top:353.2px;width:68.6px;height:33.6px;background:#2a3342;border-radius:17px;"></div>
<div class="t" style="left:865.8px;top:361.5px;transform:scaleX(1.043);font-size:19.5px;font-weight:700;color:#fff;">表示</div>
<div class="a" style="left:874.3px;top:396.1px;width:26.2px;height:26.2px;background:#fafafa;border:1.500px solid #d9d9d9;border-radius:13.100000000000023px;"></div>
<div class="t" style="left:907.7px;top:398.5px;transform:scaleX(1.052);font-size:23px;font-weight:400;color:#444;">未処理<span class="k" style="width:17.48px"><span style="transform:scaleX(0.76)">の</span></span>欠席<span class="k" style="width:34.96px"><span style="transform:scaleX(0.76)">のみ</span></span></div>
<div class="a" style="left:390.5px;top:458.5px;width:2065.5px;height:1.0px;background:#e2e2e2;"></div>
<div class="a" style="left:391.7px;top:481.0px;width:183.8px;height:78.2px;background:#d4d4d4;border-radius:12px;"></div>
<div class="t" style="left:451.5px;top:508.0px;transform:scaleX(1.071);font-size:26px;font-weight:700;color:#333;"><span class="k" style="width:59.28px"><span style="transform:scaleX(0.76)">クリア</span></span></div>
<div class="a" style="left:583.0px;top:480.0px;width:425.5px;height:80.5px;background:#00cabc;border-radius:13px;"></div>
<div class="t" style="left:765.6px;top:507.5px;transform:scaleX(1.056);font-size:29px;font-weight:700;color:#fff;">検索</div>
<div class="a" style="left:362.7px;top:645.7px;width:165.1px;height:33.6px;background:#fff;border:1.500px solid #e8e8e8;border-radius:17px;"></div>
<div class="t" style="left:375.4px;top:652.5px;transform:scaleX(1.038);font-size:23px;font-weight:400;color:#444;">1<span class="k" style="width:20.70px"><span style="transform:scaleX(0.9)">～</span></span>50 / 73 件</div>
<div class="a" style="left:568.7px;top:642.5px;width:193.9px;height:39.5px;background:#ebebeb;border-radius:14px;"></div>
<svg class="a" style="left:583.5px;top:654.3px;color:#222;" width="22.5" height="17.7" viewBox="0 0 24 18" preserveAspectRatio="none"><path fill="currentColor" fill-rule="evenodd" d="M12 0c5.500 0 9.800 4 11.800 8.300a1.600 1.600 0 0 1 0 1.400c-2 4.300-6.300 8.300-11.800 8.300s-9.800-4-11.800-8.300a1.600 1.600 0 0 1 0-1.400c2-4.300 6.300-8.300 11.800-8.300zM12 3.200a5.800 5.800 0 1 0 0 11.600a5.800 5.800 0 1 0 0-11.600z"/><path fill="currentColor" d="M12 5.200a3.800 3.800 0 1 1-3.700 2.900a2 2 0 0 0 3-2.600q.35-.3.7-.3z"/></svg>
<div class="t" style="left:612.7px;top:653.5px;transform:scaleX(1.048);font-size:19px;font-weight:700;color:#333;">表示項目<span class="k" style="width:14.44px"><span style="transform:scaleX(0.76)">を</span></span>選択</div>
<div class="t" style="left:523.8px;top:733.0px;transform:scaleX(1.036);font-size:19.5px;font-weight:700;color:#92979f;">利用日</div>
<svg class="a" style="left:595.3px;top:732.8px;color:#c9cdd6;" width="12.6" height="17.2" viewBox="0 0 12 17" preserveAspectRatio="none"><path fill="currentColor" d="M6 0l5.500 7h-11zM6 17l5.500-7h-11z"/></svg>
<div class="t" style="left:738.3px;top:733.0px;transform:scaleX(1.036);font-size:19.5px;font-weight:700;color:#92979f;">利用者名</div>
<svg class="a" style="left:828.6px;top:732.8px;color:#c9cdd6;" width="12.6" height="17.2" viewBox="0 0 12 17" preserveAspectRatio="none"><path fill="currentColor" d="M6 0l5.500 7h-11zM6 17l5.500-7h-11z"/></svg>
<div class="t" style="left:895.0px;top:733.0px;transform:scaleX(1.035);font-size:19.5px;font-weight:700;color:#92979f;">状態</div>
<svg class="a" style="left:946.0px;top:732.8px;color:#c9cdd6;" width="12.6" height="17.2" viewBox="0 0 12 17" preserveAspectRatio="none"><path fill="currentColor" d="M6 0l5.500 7h-11zM6 17l5.500-7h-11z"/></svg>
<div class="t" style="left:1073.2px;top:733.5px;transform:scaleX(1.032);font-size:19.5px;font-weight:700;color:#92979f;"><span class="k" style="width:59.28px"><span style="transform:scaleX(0.76)">パターン</span></span></div>
<svg class="a" style="left:1145.3px;top:732.8px;color:#c9cdd6;" width="12.6" height="17.2" viewBox="0 0 12 17" preserveAspectRatio="none"><path fill="currentColor" d="M6 0l5.500 7h-11zM6 17l5.500-7h-11z"/></svg>
<div class="t" style="left:1210.7px;top:733.0px;transform:scaleX(1.048);font-size:19.5px;font-weight:700;color:#92979f;">定期利用</div>
<svg class="a" style="left:1301.8px;top:732.8px;color:#c9cdd6;" width="12.6" height="17.2" viewBox="0 0 12 17" preserveAspectRatio="none"><path fill="currentColor" d="M6 0l5.500 7h-11zM6 17l5.500-7h-11z"/></svg>
<div class="t" style="left:1366.9px;top:733.0px;transform:scaleX(1.040);font-size:19.5px;font-weight:700;color:#92979f;">開始時刻</div>
<svg class="a" style="left:1458.8px;top:732.8px;color:#c9cdd6;" width="12.6" height="17.2" viewBox="0 0 12 17" preserveAspectRatio="none"><path fill="currentColor" d="M6 0l5.500 7h-11zM6 17l5.500-7h-11z"/></svg>
<div class="t" style="left:1524.7px;top:733.0px;transform:scaleX(1.028);font-size:19.5px;font-weight:700;color:#92979f;">終了時刻</div>
<svg class="a" style="left:1615.8px;top:732.8px;color:#c9cdd6;" width="12.6" height="17.2" viewBox="0 0 12 17" preserveAspectRatio="none"><path fill="currentColor" d="M6 0l5.500 7h-11zM6 17l5.500-7h-11z"/></svg>
<div class="t" style="left:1680.4px;top:733.0px;transform:scaleX(1.055);font-size:19.5px;font-weight:700;color:#92979f;">開始実績</div>
<svg class="a" style="left:1772.8px;top:732.8px;color:#c9cdd6;" width="12.6" height="17.2" viewBox="0 0 12 17" preserveAspectRatio="none"><path fill="currentColor" d="M6 0l5.500 7h-11zM6 17l5.500-7h-11z"/></svg>
<div class="t" style="left:1838.2px;top:733.0px;transform:scaleX(1.042);font-size:19.5px;font-weight:700;color:#92979f;">終了実績</div>
<svg class="a" style="left:1929.3px;top:732.8px;color:#c9cdd6;" width="12.6" height="17.2" viewBox="0 0 12 17" preserveAspectRatio="none"><path fill="currentColor" d="M6 0l5.500 7h-11zM6 17l5.500-7h-11z"/></svg>
<div class="t" style="left:1995.0px;top:733.0px;transform:scaleX(1.025);font-size:19.5px;font-weight:700;color:#92979f;">希望度</div>
<svg class="a" style="left:2066.3px;top:732.8px;color:#c9cdd6;" width="12.6" height="17.2" viewBox="0 0 12 17" preserveAspectRatio="none"><path fill="currentColor" d="M6 0l5.500 7h-11zM6 17l5.500-7h-11z"/></svg>
<div class="t" style="left:2132.5px;top:732.0px;transform:scaleX(1.062);font-size:19.5px;font-weight:700;color:#92979f;">送迎(迎<span class="k" style="width:14.82px"><span style="transform:scaleX(0.76)">え</span></span>)</div>
<svg class="a" style="left:2234.3px;top:732.8px;color:#c9cdd6;" width="12.6" height="17.2" viewBox="0 0 12 17" preserveAspectRatio="none"><path fill="currentColor" d="M6 0l5.500 7h-11zM6 17l5.500-7h-11z"/></svg>
<div class="t" style="left:2300.0px;top:733.0px;transform:scaleX(1.043);font-size:19.5px;font-weight:700;color:#92979f;">迎<span class="k" style="width:14.82px"><span style="transform:scaleX(0.76)">え</span></span>希望時刻</div>
<svg class="a" style="left:2426.7px;top:732.8px;color:#c9cdd6;" width="12.6" height="17.2" viewBox="0 0 12 17" preserveAspectRatio="none"><path fill="currentColor" d="M6 0l5.500 7h-11zM6 17l5.500-7h-11z"/></svg>
<div class="a" style="left:376.4px;top:721.8px;width:32.2px;height:33.0px;background:#fff;border:1px solid #d6d6d6;border-radius:12px;"></div>
<div class="a" style="left:362.5px;top:792.5px;width:2075.5px;height:1.0px;background:#ebebeb;"></div>
<div class="a" style="left:362.5px;top:900.9px;width:2075.5px;height:1.0px;background:#ebebeb;"></div>
<div class="a" style="left:376.4px;top:827.5px;width:32.2px;height:33.0px;background:#fff;border:1px solid #d6d6d6;border-radius:12px;"></div>
<div class="a" style="left:435.6px;top:827.5px;width:49.4px;height:40.1px;background:#ebebeb;border-radius:12px;"></div>
<svg class="a" style="left:449.5px;top:837.5px;color:#222;" width="21.8" height="20.0" viewBox="0 0 22 20" preserveAspectRatio="none"><path fill="none" stroke="currentColor" stroke-width="2.400" stroke-linecap="round" stroke-linejoin="round" d="M9.500 3.200h-5.300a3 3 0 0 0-3 3v9.600a3 3 0 0 0 3 3h9.600a3 3 0 0 0 3-3v-5.300"/><path fill="currentColor" d="M17.400 .6a2 2 0 0 1 2.800 0l.7 .7a2 2 0 0 1 0 2.800l-1 1-3.500-3.500zM15.300 2.700l3.500 3.500-6.800 6.800a2 2 0 0 1-.9 .5l-3.200 .8a.5.5 0 0 1-.6-.6l.8-3.200a2 2 0 0 1 .5-.9z"/></svg>
<div class="t" style="left:523.8px;top:837.5px;transform:scaleX(0.974);font-size:24px;font-weight:400;color:#444;">2025/11/11(火)</div>
<div class="t" style="left:738.3px;top:838.8px;transform:scaleX(1.003);font-size:23.5px;font-weight:400;color:#444;">佐藤 三郎</div>
<div class="a" style="left:896.0px;top:831.8px;width:123.8px;height:32.2px;background:#fff;border:1px solid #ebebeb;border-radius:17px;"></div>
<div class="t" style="left:910.8px;top:838.0px;transform:scaleX(1.029);font-size:23px;font-weight:400;color:#444;">希望申請</div>
<div class="t" style="left:1074.0px;top:838.8px;transform:scaleX(1.004);font-size:23.5px;font-weight:400;color:#444;">平日④</div>
<div class="t" style="left:1367.0px;top:838.3px;transform:scaleX(0.982);font-size:23.5px;font-weight:400;color:#333;">16:30</div>
<div class="t" style="left:1523.7px;top:838.3px;transform:scaleX(0.977);font-size:23.5px;font-weight:400;color:#333;">17:30</div>
<div class="a" style="left:1997.5px;top:836.8px;width:21.5px;height:21.500px;border:1.500px solid #444;border-radius:50%"></div>
<div class="t" style="left:2132.8px;top:820.7px;transform:scaleX(0.973);font-size:23.5px;font-weight:400;color:#444;">無<span class="k" style="width:17.86px"><span style="transform:scaleX(0.76)">し</span></span> 保護</div>
<div class="t" style="left:2133.5px;top:853.4px;transform:scaleX(1.000);font-size:23.5px;font-weight:400;color:#444;">者</div>
<div class="a" style="left:362.5px;top:1009.0px;width:2075.5px;height:1.0px;background:#ebebeb;"></div>
<div class="a" style="left:376.4px;top:935.6px;width:32.2px;height:33.0px;background:#fff;border:1px solid #d6d6d6;border-radius:12px;"></div>
<div class="a" style="left:435.6px;top:935.6px;width:49.4px;height:40.1px;background:#ebebeb;border-radius:12px;"></div>
<svg class="a" style="left:449.5px;top:945.6px;color:#222;" width="21.8" height="20.0" viewBox="0 0 22 20" preserveAspectRatio="none"><path fill="none" stroke="currentColor" stroke-width="2.400" stroke-linecap="round" stroke-linejoin="round" d="M9.500 3.200h-5.300a3 3 0 0 0-3 3v9.600a3 3 0 0 0 3 3h9.600a3 3 0 0 0 3-3v-5.300"/><path fill="currentColor" d="M17.400 .6a2 2 0 0 1 2.800 0l.7 .7a2 2 0 0 1 0 2.800l-1 1-3.500-3.500zM15.300 2.700l3.500 3.500-6.800 6.800a2 2 0 0 1-.9 .5l-3.200 .8a.5.5 0 0 1-.6-.6l.8-3.200a2 2 0 0 1 .5-.9z"/></svg>
<div class="t" style="left:523.8px;top:945.6px;transform:scaleX(0.974);font-size:24px;font-weight:400;color:#444;">2025/11/11(火)</div>
<div class="t" style="left:738.3px;top:946.9px;transform:scaleX(1.046);font-size:23.5px;font-weight:400;color:#444;">鈴木 <span class="k" style="width:35.72px"><span style="transform:scaleX(0.76)">はな</span></span></div>
<div class="a" style="left:896.0px;top:939.9px;width:123.8px;height:32.2px;background:#fff;border:1px solid #ebebeb;border-radius:17px;"></div>
<div class="t" style="left:910.8px;top:946.1px;transform:scaleX(1.029);font-size:23px;font-weight:400;color:#444;">希望申請</div>
<div class="t" style="left:1074.0px;top:946.9px;transform:scaleX(1.004);font-size:23.5px;font-weight:400;color:#444;">平日④</div>
<div class="t" style="left:1367.0px;top:946.4px;transform:scaleX(0.982);font-size:23.5px;font-weight:400;color:#333;">16:30</div>
<div class="t" style="left:1523.7px;top:946.4px;transform:scaleX(0.977);font-size:23.5px;font-weight:400;color:#333;">17:30</div>
<div class="a" style="left:1997.5px;top:944.9px;width:21.5px;height:21.500px;border:1.500px solid #444;border-radius:50%"></div>
<div class="t" style="left:2132.8px;top:928.8px;transform:scaleX(0.973);font-size:23.5px;font-weight:400;color:#444;">無<span class="k" style="width:17.86px"><span style="transform:scaleX(0.76)">し</span></span> 保護</div>
<div class="t" style="left:2133.5px;top:961.5px;transform:scaleX(1.000);font-size:23.5px;font-weight:400;color:#444;">者</div>
<div class="a" style="left:362.5px;top:1117.1px;width:2075.5px;height:1.0px;background:#ebebeb;"></div>
<div class="a" style="left:376.4px;top:1043.7px;width:32.2px;height:33.0px;background:#fff;border:1px solid #d6d6d6;border-radius:12px;"></div>
<div class="a" style="left:435.6px;top:1043.7px;width:49.4px;height:40.1px;background:#ebebeb;border-radius:12px;"></div>
<svg class="a" style="left:449.5px;top:1053.7px;color:#222;" width="21.8" height="20.0" viewBox="0 0 22 20" preserveAspectRatio="none"><path fill="none" stroke="currentColor" stroke-width="2.400" stroke-linecap="round" stroke-linejoin="round" d="M9.500 3.200h-5.300a3 3 0 0 0-3 3v9.600a3 3 0 0 0 3 3h9.600a3 3 0 0 0 3-3v-5.300"/><path fill="currentColor" d="M17.400 .6a2 2 0 0 1 2.800 0l.7 .7a2 2 0 0 1 0 2.800l-1 1-3.500-3.500zM15.300 2.700l3.500 3.500-6.800 6.800a2 2 0 0 1-.9 .5l-3.200 .8a.5.5 0 0 1-.6-.6l.8-3.200a2 2 0 0 1 .5-.9z"/></svg>
<div class="t" style="left:523.8px;top:1054.2px;transform:scaleX(0.984);font-size:24px;font-weight:400;color:#444;">2025/11/12(水)</div>
<div class="t" style="left:737.4px;top:1038.0px;transform:scaleX(0.994);font-size:23.5px;font-weight:400;color:#444;"><span class="k" style="width:71.44px"><span style="transform:scaleX(0.76)">コノベル</span></span> 太</div>
<div class="t" style="left:739.0px;top:1069.3px;transform:scaleX(1.048);font-size:23.5px;font-weight:400;color:#444;">郎</div>
<div class="a" style="left:896.0px;top:1048.0px;width:123.8px;height:32.2px;background:#fff;border:1px solid #ebebeb;border-radius:17px;"></div>
<div class="t" style="left:910.8px;top:1054.2px;transform:scaleX(1.029);font-size:23px;font-weight:400;color:#444;">希望申請</div>
<div class="t" style="left:1074.0px;top:1055.0px;transform:scaleX(1.004);font-size:23.5px;font-weight:400;color:#444;">平日②</div>
<div class="t" style="left:1367.0px;top:1054.5px;transform:scaleX(0.982);font-size:23.5px;font-weight:400;color:#333;">14:30</div>
<div class="t" style="left:1523.7px;top:1054.5px;transform:scaleX(0.977);font-size:23.5px;font-weight:400;color:#333;">15:30</div>
<div class="a" style="left:1997.5px;top:1053.0px;width:21.5px;height:21.500px;border:1.500px solid #444;border-radius:50%"></div>
<div class="t" style="left:2132.8px;top:1036.9px;transform:scaleX(0.973);font-size:23.5px;font-weight:400;color:#444;">無<span class="k" style="width:17.86px"><span style="transform:scaleX(0.76)">し</span></span> 保護</div>
<div class="t" style="left:2133.5px;top:1069.6px;transform:scaleX(1.000);font-size:23.5px;font-weight:400;color:#444;">者</div>
<div class="a" style="left:362.5px;top:1225.2px;width:2075.5px;height:1.0px;background:#ebebeb;"></div>
<div class="a" style="left:376.4px;top:1151.8px;width:32.2px;height:33.0px;background:#fff;border:1px solid #d6d6d6;border-radius:12px;"></div>
<div class="a" style="left:435.6px;top:1151.8px;width:49.4px;height:40.1px;background:#ebebeb;border-radius:12px;"></div>
<svg class="a" style="left:449.5px;top:1161.8px;color:#222;" width="21.8" height="20.0" viewBox="0 0 22 20" preserveAspectRatio="none"><path fill="none" stroke="currentColor" stroke-width="2.400" stroke-linecap="round" stroke-linejoin="round" d="M9.500 3.200h-5.300a3 3 0 0 0-3 3v9.600a3 3 0 0 0 3 3h9.600a3 3 0 0 0 3-3v-5.300"/><path fill="currentColor" d="M17.400 .6a2 2 0 0 1 2.800 0l.7 .7a2 2 0 0 1 0 2.800l-1 1-3.500-3.500zM15.300 2.700l3.500 3.500-6.800 6.800a2 2 0 0 1-.9 .5l-3.200 .8a.5.5 0 0 1-.6-.6l.8-3.200a2 2 0 0 1 .5-.9z"/></svg>
<div class="t" style="left:523.8px;top:1162.3px;transform:scaleX(0.984);font-size:24px;font-weight:400;color:#444;">2025/11/12(水)</div>
<div class="t" style="left:738.5px;top:1145.6px;transform:scaleX(0.960);font-size:23.5px;font-weight:400;color:#444;">山田 <span class="k" style="width:35.72px"><span style="transform:scaleX(0.76)">コノ</span></span></div>
<div class="t" style="left:739.0px;top:1176.9px;transform:scaleX(1.000);font-size:23.5px;font-weight:400;color:#444;">子</div>
<div class="a" style="left:896.0px;top:1156.1px;width:123.8px;height:32.2px;background:#fff;border:1px solid #ebebeb;border-radius:17px;"></div>
<div class="t" style="left:910.8px;top:1162.3px;transform:scaleX(1.029);font-size:23px;font-weight:400;color:#444;">希望申請</div>
<div class="t" style="left:1074.0px;top:1163.1px;transform:scaleX(1.004);font-size:23.5px;font-weight:400;color:#444;">平日④</div>
<div class="t" style="left:1367.0px;top:1162.6px;transform:scaleX(0.982);font-size:23.5px;font-weight:400;color:#333;">16:30</div>
<div class="t" style="left:1523.7px;top:1162.6px;transform:scaleX(0.977);font-size:23.5px;font-weight:400;color:#333;">17:30</div>
<div class="a" style="left:1997.5px;top:1161.1px;width:21.5px;height:21.500px;border:1.500px solid #444;border-radius:50%"></div>
<div class="t" style="left:2132.8px;top:1145.0px;transform:scaleX(0.973);font-size:23.5px;font-weight:400;color:#444;">無<span class="k" style="width:17.86px"><span style="transform:scaleX(0.76)">し</span></span> 保護</div>
<div class="t" style="left:2133.5px;top:1177.7px;transform:scaleX(1.000);font-size:23.5px;font-weight:400;color:#444;">者</div>
<div class="a" style="left:362.5px;top:1333.3px;width:2075.5px;height:1.0px;background:#ebebeb;"></div>
<div class="a" style="left:376.4px;top:1259.9px;width:32.2px;height:33.0px;background:#fff;border:1px solid #d6d6d6;border-radius:12px;"></div>
<div class="a" style="left:435.6px;top:1259.9px;width:49.4px;height:40.1px;background:#ebebeb;border-radius:12px;"></div>
<svg class="a" style="left:449.5px;top:1269.9px;color:#222;" width="21.8" height="20.0" viewBox="0 0 22 20" preserveAspectRatio="none"><path fill="none" stroke="currentColor" stroke-width="2.400" stroke-linecap="round" stroke-linejoin="round" d="M9.500 3.200h-5.300a3 3 0 0 0-3 3v9.600a3 3 0 0 0 3 3h9.600a3 3 0 0 0 3-3v-5.300"/><path fill="currentColor" d="M17.400 .6a2 2 0 0 1 2.800 0l.7 .7a2 2 0 0 1 0 2.800l-1 1-3.500-3.500zM15.300 2.700l3.500 3.500-6.800 6.800a2 2 0 0 1-.9 .5l-3.200 .8a.5.5 0 0 1-.6-.6l.8-3.200a2 2 0 0 1 .5-.9z"/></svg>
<div class="t" style="left:523.8px;top:1270.4px;transform:scaleX(0.984);font-size:24px;font-weight:400;color:#444;">2025/11/12(水)</div>
<div class="t" style="left:738.3px;top:1271.2px;transform:scaleX(1.003);font-size:23.5px;font-weight:400;color:#444;">佐藤 三郎</div>
<div class="a" style="left:896.0px;top:1264.2px;width:123.8px;height:32.2px;background:#fff;border:1px solid #ebebeb;border-radius:17px;"></div>
<div class="t" style="left:910.8px;top:1270.4px;transform:scaleX(1.029);font-size:23px;font-weight:400;color:#444;">希望申請</div>
<div class="t" style="left:1074.0px;top:1271.2px;transform:scaleX(1.004);font-size:23.5px;font-weight:400;color:#444;">平日④</div>
<div class="t" style="left:1367.0px;top:1270.7px;transform:scaleX(0.982);font-size:23.5px;font-weight:400;color:#333;">16:30</div>
<div class="t" style="left:1523.7px;top:1270.7px;transform:scaleX(0.977);font-size:23.5px;font-weight:400;color:#333;">17:30</div>
<div class="a" style="left:1997.5px;top:1269.2px;width:21.5px;height:21.500px;border:1.500px solid #444;border-radius:50%"></div>
<div class="t" style="left:2132.8px;top:1253.1px;transform:scaleX(0.973);font-size:23.5px;font-weight:400;color:#444;">無<span class="k" style="width:17.86px"><span style="transform:scaleX(0.76)">し</span></span> 保護</div>
<div class="t" style="left:2133.5px;top:1285.8px;transform:scaleX(1.000);font-size:23.5px;font-weight:400;color:#444;">者</div>
<div class="a" style="left:2438.0px;top:710.0px;width:25.0px;height:614.0px;background:#fbfbfb;"></div>
<svg class="a" style="left:2442.5px;top:717.5px;" width="16.0" height="11.5" viewBox="0 0 16 11.500" preserveAspectRatio="none"><path fill="#8b8b8b" stroke="#8b8b8b" stroke-width="2.200" stroke-linejoin="round" d="M8 1.300l6.500 9h-13z"/></svg>
<div class="a" style="left:2443.4px;top:1008.0px;width:14.6px;height:70.5px;background:#8b8b8b;border-radius:7.3px;"></div>
<div class="a" style="left:358.3px;top:806.6px;width:66.5px;height:72.6px;border:6px solid #ff0000;border-radius:12px;"></div>
<div class="a" style="left:0;top:0;width:2560px;height:1328px;border:1px solid #c4f1e3;pointer-events:none"></div>
<div class="a" style="left:1px;top:1px;width:2558px;height:1326px;border:3px solid #00c896;pointer-events:none"></div>
</body></html>
